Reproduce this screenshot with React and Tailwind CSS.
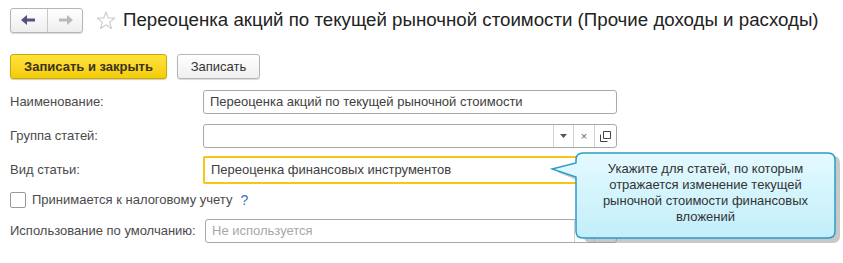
const FONT = { fontFamily: '"Liberation Sans", Arial, sans-serif' }

function NavButtons() {
  return (
    <div className="flex h-[25px] w-[73px] rounded-[3px] border border-[#b5b5b5] bg-gradient-to-b from-white to-[#eeeeee] shadow-[0_1px_1px_rgba(0,0,0,0.15)]">
      <div className="flex w-[37px] items-center justify-center border-r border-[#c8c8c8]">
        <svg width="16" height="10" viewBox="0 0 16 10">
          <path d="M0 5 L6 0 L6 3.5 L14 3.5 L14 6.5 L6 6.5 L6 10 Z" fill="#5b4e7e" />
        </svg>
      </div>
      <div className="flex flex-1 items-center justify-center">
        <svg width="16" height="10" viewBox="0 0 16 10">
          <path d="M16 5 L10 0 L10 3.5 L2 3.5 L2 6.5 L10 6.5 L10 10 Z" fill="#b9b9b9" />
        </svg>
      </div>
    </div>
  )
}

function Star() {
  return (
    <svg width="20" height="19" viewBox="0 0 20 19">
      <path
        d="M10 1 L12.3 7 L18.6 7.2 L13.6 11.1 L15.4 17.4 L10 13.8 L4.6 17.4 L6.4 11.1 L1.4 7.2 L7.7 7 Z"
        fill="none"
        stroke="#cfcfcf"
        strokeWidth="1.2"
        strokeLinejoin="round"
      />
    </svg>
  )
}

function Field({ value, placeholder, buttons }) {
  return (
    <div className="flex h-[24px] flex-1 rounded-[3px] border border-[#a9a9a9] bg-white">
      <div className="flex flex-1 items-center px-[6px] text-[13px] text-[#404040]">
        {value || <span className="text-[#a8a8a8]">{placeholder}</span>}
      </div>
      {buttons}
    </div>
  )
}

function GroupButtons() {
  return (
    <>
      <div className="flex w-[20px] items-center justify-center border-l border-[#d0d0d0]">
        <svg width="7" height="4" viewBox="0 0 7 4"><path d="M0 0 L7 0 L3.5 4 Z" fill="#555" /></svg>
      </div>
      <div className="flex w-[21px] items-center justify-center border-l border-[#d0d0d0] text-[11px] text-[#666]">×</div>
      <div className="flex w-[22px] items-center justify-center border-l border-[#d0d0d0]">
        <svg width="11" height="11" viewBox="0 0 11 11">
          <path d="M3.5 0.5 H10.5 V7.5 H3.5 Z" fill="none" stroke="#444" />
          <path d="M0.5 3.5 V10.5 H7.5" fill="none" stroke="#444" />
        </svg>
      </div>
    </>
  )
}

function Tooltip() {
  return (
    <div className="absolute left-[550px] top-[151px] h-[92px] w-[290px]">
      <svg width="290" height="92" viewBox="0 0 290 92" className="absolute left-0 top-0">
        <defs>
          <linearGradient id="tipg" x1="0" y1="0" x2="0" y2="1">
            <stop offset="0" stopColor="#e4fafe" />
            <stop offset="1" stopColor="#c2eefb" />
          </linearGradient>
        </defs>
        <path
          d="M38 2 H280 Q287 2 287 9 V82 Q287 89 280 89 H38 Q31 89 31 82 V29 L4 18 L31 12 V9 Q31 2 38 2 Z"
          fill="#9a9a9a"
          opacity="0.55"
          transform="translate(3 3)"
        />
        <path
          d="M33 2 H278 Q285 2 285 9 V80 Q285 87 278 87 H33 Q26 87 26 80 V26 L2 18 L26 12 V9 Q26 2 33 2 Z"
          fill="url(#tipg)"
          stroke="#2a9cc6"
          strokeWidth="1.5"
        />
      </svg>
      <div className="absolute left-[26px] top-[10px] w-[259px] text-center text-[13px] leading-[16px] text-[#333]">
        Укажите для статей, по которым<br />
        отражается изменение текущей<br />
        рыночной стоимости финансовых<br />
        вложений
      </div>
    </div>
  )
}

export default function App() {
  return (
    <div className="relative h-[263px] w-[843px] overflow-hidden bg-white" style={FONT}>
      <div className="flex items-center pl-[10px] pt-[7px]">
        <NavButtons />
        <div className="ml-[13px] mt-[1px]"><Star /></div>
        <h1 className="ml-[7px] whitespace-nowrap text-[18.7px] leading-[26px] text-[#222]">
          Переоценка акций по текущей рыночной стоимости (Прочие доходы и расходы)
        </h1>
      </div>

      <div className="mt-[21px] flex gap-[10px] pl-[10px]">
        <button className="h-[25px] w-[157px] rounded-[3px] border border-[#c9a900] bg-gradient-to-b from-[#ffe23a] to-[#f4cd00] text-[13px] font-bold text-[#3b3220] shadow-[0_1px_1px_rgba(0,0,0,0.2)]">
          Записать и закрыть
        </button>
        <button className="h-[25px] w-[83px] rounded-[3px] border border-[#b5b5b5] bg-gradient-to-b from-white to-[#efefef] text-[13px] text-[#333] shadow-[0_1px_1px_rgba(0,0,0,0.15)]">
          Записать
        </button>
      </div>

      <div className="mt-[11px] flex flex-col pl-[10px] pr-[226px] text-[13px] text-[#4a4a4a]">
        <div className="flex h-[24px] items-center">
          <div className="w-[193px]">Наименование:</div>
          <Field value="Переоценка акций по текущей рыночной стоимости" />
        </div>
        <div className="mt-[10px] flex h-[24px] items-center">
          <div className="w-[193px]">Группа статей:</div>
          <Field value="" buttons={<GroupButtons />} />
        </div>
        <div className="mt-[8px] flex h-[28px] items-center">
          <div className="w-[193px]">Вид статьи:</div>
          <div className="flex h-[28px] flex-1 items-center rounded-[2px] border-2 border-[#f5c518] bg-white px-[6px] text-[#404040]">
            Переоценка финансовых инструментов
          </div>
        </div>
        <div className="mt-[8px] flex h-[16px] items-center">
          <div className="h-[16px] w-[16px] rounded-[2px] border border-[#9a9a9a] bg-white" />
          <div className="ml-[6px]">Принимается к налоговому учету</div>
          <div className="ml-[8px] text-[14px] text-[#2e78c0]">?</div>
        </div>
        <div className="mt-[10px] flex h-[25px] items-center">
          <div className="w-[195px] whitespace-nowrap">Использование по умолчанию:</div>
          <Field
            placeholder="Не используется"
            buttons={
              <>
                <div className="w-[20px] border-l border-[#d0d0d0]" />
                <div className="w-[22px] border-l border-[#d0d0d0]" />
              </>
            }
          />
        </div>
      </div>

      <Tooltip />
    </div>
  )
}
